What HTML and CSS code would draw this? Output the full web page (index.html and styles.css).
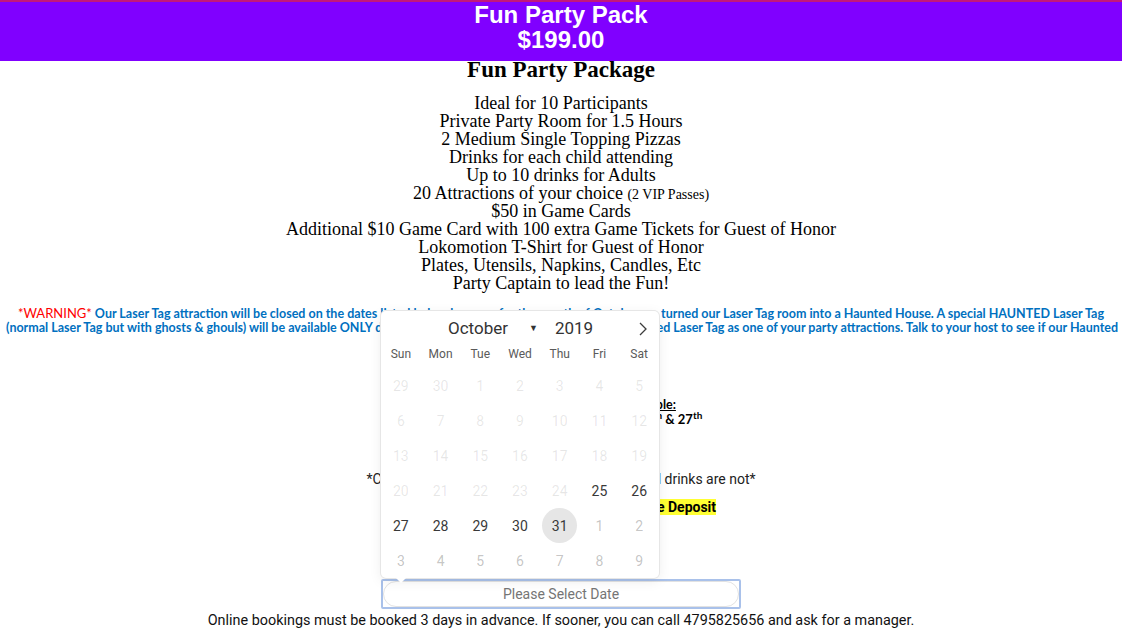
FILE: index.html
```html
<!DOCTYPE html>
<html lang="en">
<head>
    <meta charset="UTF-8">
    <meta name="viewport" content="width=device-width, initial-scale=1.0">
    <title>Fun Party Pack</title>
    <link rel="stylesheet" href="styles.css">
</head>
<body>

<!-- Package Banner -->
<div class="banner">
    <div>Fun Party Pack</div>
    <div>$199.00</div>
</div>

<!-- Package Details -->
<div class="details">
    <h2 class="details-title">Fun Party Package</h2>
    <ul class="perks">
        <li>Ideal for 10 Participants</li>
        <li>Private Party Room for 1.5 Hours</li>
        <li>2 Medium Single Topping Pizzas</li>
        <li>Drinks for each child attending</li>
        <li>Up to 10 drinks for Adults</li>
        <li>20 Attractions of your choice <small>(2 VIP Passes)</small></li>
        <li>$50 in Game Cards</li>
        <li>Additional $10 Game Card with 100 extra Game Tickets for Guest of Honor</li>
        <li>Lokomotion T-Shirt for Guest of Honor</li>
        <li>Plates, Utensils, Napkins, Candles, Etc</li>
        <li>Party Captain to lead the Fun!</li>
    </ul>
</div>

<!-- Laser Tag Notice -->
<div class="notice">
    <p class="notice-line"><span class="warn">*WARNING*</span> Our Laser Tag attraction will be closed on the dates listed below because for the month of October we turned our Laser Tag room into a Haunted House. A special HAUNTED Laser Tag</p>
    <p class="notice-line">(normal Laser Tag but with ghosts &amp; ghouls) will be available ONLY during the dates listed below. You may book Haunted Laser Tag as one of your party attractions. Talk to your host to see if our Haunted</p>
    <p class="notice-line">Laser Tag is open for your party.</p>

    <p class="dates-head">Dates that Haunted Laser Tag is available:</p>
    <p class="dates">Friday through Sunday: October 25<sup>th</sup>, 26<sup>th</sup> &amp; 27<sup>th</sup></p>
</div>

<!-- Booking -->
<div class="booking">
    <p class="rule">*Cakes are welcome, however outside food and drinks are not*</p>
    <p class="rule"><span class="mark">$50 Due at Booking as a Non-Refundable Deposit</span></p>

    <div class="date-field">
        <!-- Date picker popup, opened above the field -->
        <div class="picker">
            <div class="picker-month">
                <span class="month-name">October</span>
                <span class="month-caret">&#9660;</span>
                <span class="month-year">2019</span>
                <svg class="month-next" width="10" height="14" viewBox="0 0 10 14">
                    <polyline points="2,1 8,7 2,13" fill="none" stroke="#3c3c3c" stroke-width="1.3"/>
                </svg>
            </div>
            <div class="picker-weekdays">
                <span>Sun</span><span>Mon</span><span>Tue</span><span>Wed</span><span>Thu</span><span>Fri</span><span>Sat</span>
            </div>
            <div class="picker-days">
                <span class="day off">29</span><span class="day off">30</span><span class="day off">1</span><span class="day off">2</span><span class="day off">3</span><span class="day off">4</span><span class="day off">5</span>
                <span class="day off">6</span><span class="day off">7</span><span class="day off">8</span><span class="day off">9</span><span class="day off">10</span><span class="day off">11</span><span class="day off">12</span>
                <span class="day off">13</span><span class="day off">14</span><span class="day off">15</span><span class="day off">16</span><span class="day off">17</span><span class="day off">18</span><span class="day off">19</span>
                <span class="day off">20</span><span class="day off">21</span><span class="day off">22</span><span class="day off">23</span><span class="day off">24</span><span class="day">25</span><span class="day">26</span>
                <span class="day">27</span><span class="day">28</span><span class="day">29</span><span class="day">30</span><span class="day today">31</span><span class="day next">1</span><span class="day next">2</span>
                <span class="day next">3</span><span class="day next">4</span><span class="day next">5</span><span class="day next">6</span><span class="day next">7</span><span class="day next">8</span><span class="day next">9</span>
            </div>
        </div>
        <input type="text" class="date-input" placeholder="Please Select Date" readonly>
    </div>

    <p class="booking-note">Online bookings must be booked 3 days in advance. If sooner, you can call 4795825656 and ask for a manager.</p>
</div>

</body>
</html>
```

FILE: styles.css
```css
/* Global Styles */
body {
    margin: 0;
    background: #fff;
    color: #000;
    font-family: 'Liberation Serif', 'Times New Roman', serif;
}

p {
    margin: 0;
}

/* Banner */
.banner {
    background: #8000ff;
    border-top: 2px solid #c2187a;
    color: #fff;
    font-family: 'Liberation Sans', Arial, sans-serif;
    font-weight: bold;
    font-size: 24px;
    line-height: 25px;
    text-align: center;
    padding-bottom: 9px;
}

/* Package Details */
.details {
    text-align: center;
}

.details-title {
    margin: 0;
    font-size: 23px;
    line-height: 18px;
}

.perks {
    list-style: none;
    margin: 15px 0 0;
    padding: 0;
    font-size: 18px;
    line-height: 18px;
}

.perks small {
    font-size: 14px;
    line-height: 0;
}

/* Laser Tag Notice */
.notice {
    margin-top: 14px;
    padding: 0 6px;
    text-align: center;
    font-family: Lato, 'Open Sans', sans-serif;
    font-weight: bold;
    font-size: 12.5px;
    line-height: 14px;
}

.notice-line {
    color: #0070c0;
    white-space: nowrap;
}

.warn {
    color: #ff0000;
    font-weight: normal;
    font-size: 13px;
}

.dates-head {
    margin-top: 48px;
    line-height: 15px;
    text-decoration: underline;
}

.dates {
    line-height: 15px;
    font-size: 13px;
}

.dates sup {
    font-size: 10px;
    line-height: 0;
}

/* Booking */
.booking {
    margin-top: 38px;
    text-align: center;
    font-family: Roboto, 'Noto Sans', sans-serif;
    font-size: 14px;
}

.rule {
    line-height: 28px;
    color: #222;
}

.mark {
    background: #ffff33;
    font-weight: bold;
    color: #000;
}

.date-field {
    position: relative;
    width: 356px;
    height: 26px;
    margin: 58px auto 0;
    border: 2px solid #a9c1ea;
    border-radius: 2px;
}

.date-input {
    box-sizing: border-box;
    width: 100%;
    height: 100%;
    margin: 0;
    border: 1px solid #e2e2e2;
    border-radius: 14px;
    background: #fff;
    text-align: center;
    font-family: Roboto, sans-serif;
    font-size: 14px;
    outline: none;
}

.date-input::placeholder {
    color: #757575;
}

.booking-note {
    margin-top: 2px;
    line-height: 20px;
    font-size: 14.4px;
    color: #111;
}

/* Date Picker */
.picker {
    position: absolute;
    left: -2px;
    bottom: calc(100% + 3px);
    width: 278px;
    background: #fff;
    border-radius: 5px;
    box-shadow: 1px 0 0 #e6e6e6, -1px 0 0 #e6e6e6, 0 1px 0 #e6e6e6, 0 -1px 0 #e6e6e6, 0 3px 13px rgba(0, 0, 0, 0.08);
    font-family: Roboto, sans-serif;
    color: #393939;
}

.picker::after {
    content: "";
    position: absolute;
    left: 15px;
    top: 100%;
    border: 5px solid transparent;
    border-top-color: #fff;
}

.picker-month {
    position: relative;
    height: 34px;
    display: flex;
    align-items: center;
    padding-left: 67px;
    font-size: 17px;
    color: #333;
}

.month-caret {
    margin-left: 21px;
    font-size: 9px;
}

.month-year {
    margin-left: 17px;
}

.month-next {
    position: absolute;
    right: 11px;
    top: 11px;
}

.picker-weekdays {
    display: grid;
    grid-template-columns: repeat(7, 1fr);
    height: 18px;
    line-height: 18px;
    font-size: 12px;
    color: #5a5a5a;
    text-align: center;
}

.picker-days {
    display: grid;
    grid-template-columns: repeat(7, 1fr);
    grid-auto-rows: 35px;
    padding-top: 5px;
}

.day {
    display: flex;
    align-items: center;
    justify-content: center;
    font-size: 14px;
    color: #393939;
}

.day.off {
    color: rgba(57, 57, 57, 0.12);
}

.day.next {
    color: rgba(57, 57, 57, 0.3);
}

.day.today {
    background: #e6e6e6;
    border-radius: 50%;
    width: 35px;
    height: 35px;
    justify-self: center;
}
```
